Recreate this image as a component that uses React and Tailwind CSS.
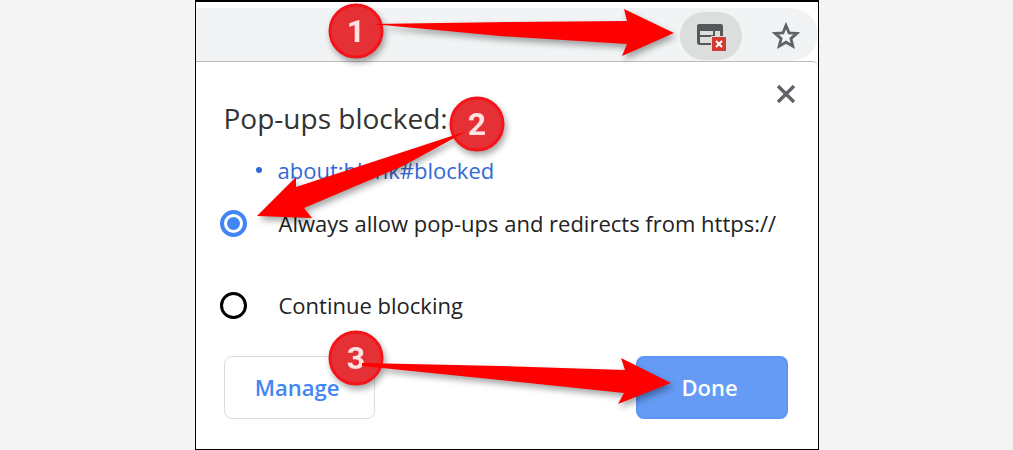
import { useState } from 'react'

const badges = [
  { label: '1', x: 161, y: 31 },
  { label: '2', x: 282, y: 124 },
  { label: '3', x: 161, y: 358 },
]

const arrows = [
  '177,24 315,22 432,21 429,9 479,33 427,56 432,44 305,36',
  '272,131 101,187 101,177 62,216 117,218 109,208 208,166',
  '167,363 305,366 430,370 426,358 476,383 423,404 429,393 305,380 167,366',
]

const radioStyle =
  'size-[27px] shrink-0 appearance-none rounded-full border-black border-[3px] checked:border-4 checked:border-[#4285f4] checked:bg-[#4285f4] checked:bg-clip-content checked:p-[3px]'

function PopupIcon() {
  return (
    <svg width="31" height="31" viewBox="-2 -3 31 31" aria-hidden="true">
      <path
        fill="#55585b"
        fillRule="evenodd"
        d="M2 0h22a2 2 0 0 1 2 2v19H3a3 3 0 0 1-3-3V2a2 2 0 0 1 2-2zM3 7v4h13V7zM3 13v6h13v-6zM18 7v12h5V7z"
      />
      <path fill="#dcdddd" d="M14 12h16v16H14z" />
      <path fill="#d23b30" d="M15 13h14v14H15z" />
      <path stroke="#fff" strokeWidth="2" d="M19 17l6 6M25 17l-6 6" />
    </svg>
  )
}

function StarIcon() {
  return (
    <svg width="30" height="30" viewBox="0 0 30 30" aria-hidden="true">
      <path
        fill="none"
        stroke="#5f6368"
        strokeWidth="2.8"
        d="M15 4.5l3 7.3 7.9.6-6 5.2 1.9 7.6-6.8-4-6.8 4 1.9-7.6-6-5.2 7.9-.6z"
      />
    </svg>
  )
}

function CloseIcon() {
  return (
    <svg width="20" height="20" viewBox="0 0 20 20" aria-hidden="true">
      <path stroke="#5f6368" strokeWidth="3.4" d="M2 2l16 16M18 2L2 18" />
    </svg>
  )
}

function Annotations() {
  return (
    <svg
      className="pointer-events-none absolute top-0 left-0 drop-shadow-[2px_4px_3px_rgba(0,0,0,0.35)]"
      width="624"
      height="450"
      viewBox="0 0 624 450"
    >
      {badges.map((b) => (
        <g key={b.label}>
          <circle cx={b.x} cy={b.y} r="26" fill="#e53035" stroke="#f5141b" strokeWidth="3" />
          <text
            x={b.x}
            y={b.y + 11}
            textAnchor="middle"
            className="fill-[#ffe3e3] font-[Roboto,sans-serif] text-[32px] font-bold"
          >
            {b.label}
          </text>
        </g>
      ))}
      {arrows.map((points) => (
        <polygon key={points} points={points} fill="#fe0000" />
      ))}
    </svg>
  )
}

function App() {
  const [choice, setChoice] = useState('allow')

  return (
    <div className="min-h-screen bg-[#f4f4f4] font-['Open_Sans',sans-serif]">
      <div className="relative mx-auto w-full max-w-[624px]">
        <div className="border-x border-y-2 border-black bg-white">
          {/* Address bar */}
          <div className="pt-1.5">
            <div className="flex h-[53px] items-end justify-end gap-7 rounded-r-full bg-[#f1f3f4] pr-4 pb-px">
              <button
                aria-label="Pop-ups blocked"
                className="flex h-12 w-[62px] items-center justify-center rounded-full bg-[#dcdddd]"
              >
                <PopupIcon />
              </button>
              <button
                aria-label="Bookmark this page"
                className="flex h-12 w-8 items-center justify-center"
              >
                <StarIcon />
              </button>
            </div>
          </div>

          {/* Pop-up bubble */}
          <div className="rounded-tr-md border-t border-[#b9bbbc] bg-white pr-[30px] pb-[30px] pl-6">
            <div className="flex h-[76px] items-end justify-between pl-1">
              <h1 className="text-[28px] leading-10 text-[#333]">Pop-ups blocked:</h1>
              <button aria-label="Close" className="-mr-3 self-start p-1 pt-[22px]">
                <CloseIcon />
              </button>
            </div>

            <ul className="mt-4 text-[22px] leading-8 text-[#3367d6]">
              <li className="flex items-center gap-4 pl-9">
                <span className="size-1.5 rounded-full bg-[#3367d6]"></span>
                <a href="#blocked">about:blank#blocked</a>
              </li>
            </ul>

            <label className="mt-[21px] flex items-center gap-8 text-[22px] leading-8 whitespace-nowrap text-[#222]">
              <input
                type="radio"
                name="popups"
                className={radioStyle}
                checked={choice === 'allow'}
                onChange={() => setChoice('allow')}
              />
              Always allow pop-ups and redirects from https://
            </label>
            <label className="mt-[50px] flex items-center gap-8 text-[22px] leading-8 text-[#222]">
              <input
                type="radio"
                name="popups"
                className={radioStyle}
                checked={choice === 'block'}
                onChange={() => setChoice('block')}
              />
              Continue blocking
            </label>

            <div className="mt-[35px] flex justify-between pl-1 text-[22px] font-semibold">
              <button className="h-[63px] w-[151px] rounded-lg border border-[#dadce0] pr-1 text-[#4285f4]">
                Manage
              </button>
              <button className="h-[63px] w-[152px] rounded-lg border-2 border-[#5b95f5] bg-[#659bf4] pr-1 text-white">
                Done
              </button>
            </div>
          </div>
        </div>
        <Annotations />
      </div>
    </div>
  )
}

export default App
